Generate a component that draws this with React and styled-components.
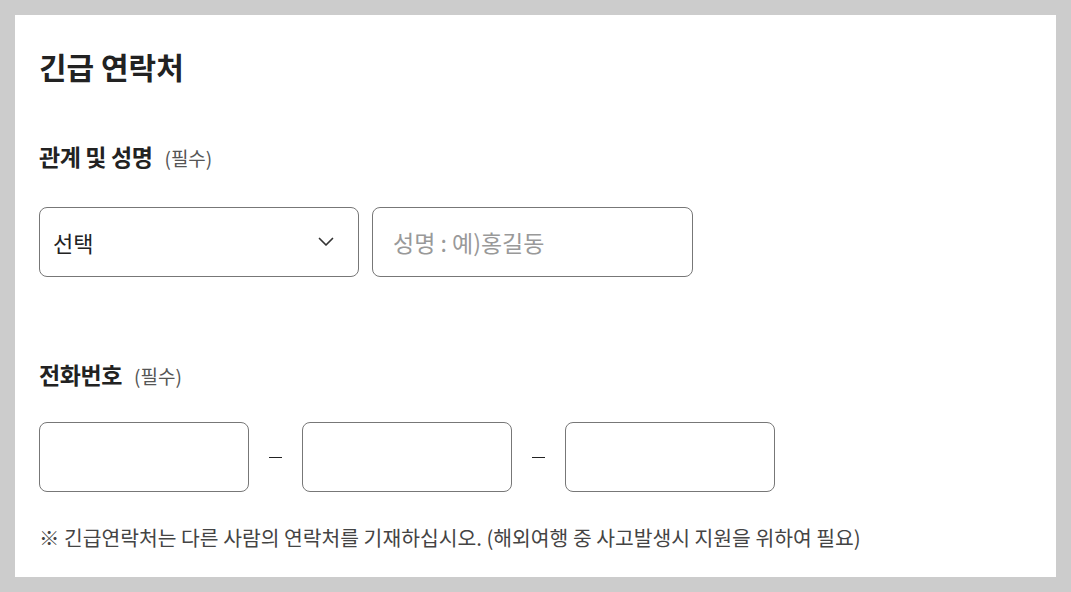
import React from 'react';
import styled, { createGlobalStyle } from 'styled-components';

const GlobalStyle = createGlobalStyle`
  html, body {
    margin: 0;
    padding: 0;
    background: #cccccc;
    font-family: "Noto Sans CJK KR", "Noto Sans", sans-serif;
  }
`;

function ChevronDown() {
  return (
    <svg width="16" height="10" viewBox="0 0 16 10" fill="none">
      <path d="M1.5 1.5 L8 8 L14.5 1.5" stroke="#333" strokeWidth="1.7" strokeLinecap="round" strokeLinejoin="round" />
    </svg>
  );
}

export default function App() {
  return (
    <>
      <GlobalStyle />
      <Page>
        <Card>
          <Title>긴급 연락처</Title>

          <Label $top={55}>
            관계 및 성명<Required>(필수)</Required>
          </Label>
          <Row $gap={13}>
            <Select>
              <span>선택</span>
              <ChevronDown />
            </Select>
            <Field $width={321} placeholder="성명 : 예)홍길동" />
          </Row>

          <Label $top={82}>
            전화번호<Required>(필수)</Required>
          </Label>
          <Row $gap={0}>
            <Field $width={210} />
            <Dash />
            <Field $width={210} />
            <Dash />
            <Field $width={210} />
          </Row>

          <Note>※ 긴급연락처는 다른 사람의 연락처를 기재하십시오. (해외여행 중 사고발생시 지원을 위하여 필요)</Note>
        </Card>
      </Page>
    </>
  );
}

const Page = styled.div`
  padding: 15px;
  width: 1071px;
  height: 592px;
  box-sizing: border-box;
`;

const Card = styled.div`
  background: #fff;
  height: 562px;
  box-sizing: border-box;
  padding: 31px 24px 0 24px;
`;

const Title = styled.h1`
  margin: 0;
  font-size: 30px;
  font-weight: 700;
  line-height: 40px;
  color: #222;
`;

const Label = styled.div`
  margin-top: ${({ $top }) => $top}px;
  font-size: 23px;
  font-weight: 700;
  line-height: 30px;
  color: #222;
  letter-spacing: -0.4px;
`;

const Required = styled.span`
  font-size: 19px;
  font-weight: 400;
  color: #555;
  margin-left: 12px;
  letter-spacing: 0;
`;

const Row = styled.div`
  display: flex;
  align-items: center;
  gap: ${({ $gap }) => $gap}px;
  margin-top: ${({ $gap }) => ($gap ? 34 : 31)}px;
`;

const Select = styled.div`
  width: 320px;
  height: 70px;
  box-sizing: border-box;
  border: 1px solid #777;
  border-radius: 8px;
  display: flex;
  align-items: center;
  justify-content: space-between;
  padding: 0 24px 0 13px;
  font-size: 22px;
  color: #222;
`;

const Field = styled.input`
  width: ${({ $width }) => $width}px;
  height: 70px;
  box-sizing: border-box;
  border: 1px solid #777;
  border-radius: 8px;
  padding: 0 20px;
  font-family: inherit;
  font-size: 23px;
  color: #222;
  outline: none;
  &::placeholder {
    color: #999;
  }
`;

const Dash = styled.span`
  width: 53px;
  display: flex;
  justify-content: center;
  &::before {
    content: '';
    display: block;
    width: 13px;
    height: 1.5px;
    background: #222;
    margin-top: 1px;
  }
`;

const Note = styled.p`
  margin: 30px 0 0;
  font-size: 20.4px;
  line-height: 30px;
  color: #444;
`;
